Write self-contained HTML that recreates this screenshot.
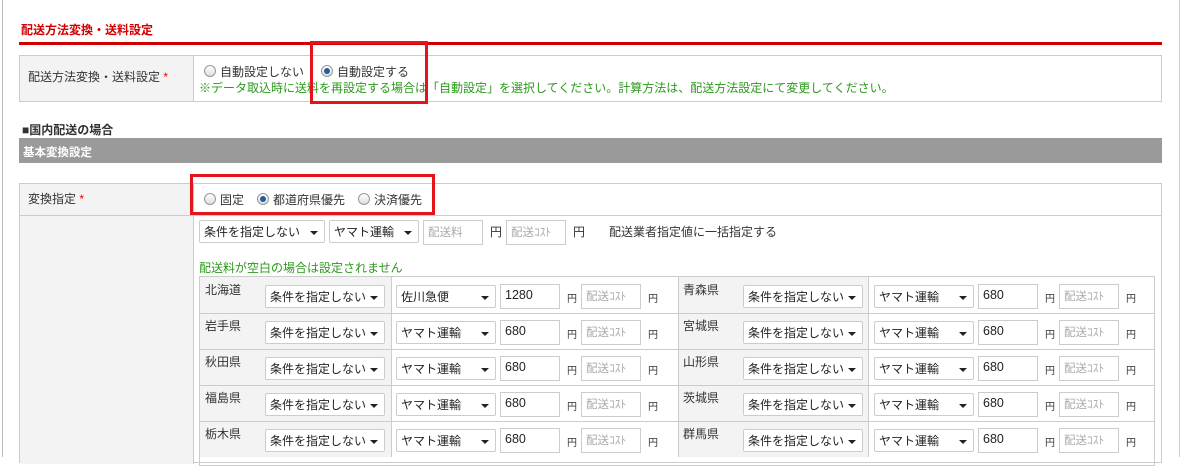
<!DOCTYPE html>
<html><head><meta charset="utf-8"><style>
*{box-sizing:border-box;margin:0;padding:0}
body{width:1183px;height:457px;overflow:hidden;background:#fff;font-family:"Liberation Sans","Noto Sans CJK JP",sans-serif;font-size:12px;color:#333;position:relative}
.a{position:absolute;white-space:nowrap}
.sel{position:absolute;height:23px;border:1px solid #ccc;border-radius:2px;background:#fff;font-size:12px;color:#222;padding:2px 4px;white-space:nowrap}
.sel:after{content:"";position:absolute;right:6px;top:10px;border-left:4px solid transparent;border-right:4px solid transparent;border-top:4px solid #222}
.inp{position:absolute;height:25px;border:1px solid #ccc;background:#fff;font-size:12.5px;padding:3px 4px;color:#222}
.ph{color:#aaa;font-size:11.5px}
.y{position:absolute;font-size:10px;color:#333}
.rad{position:absolute;width:12px;height:12px;border:1px solid #999;border-radius:50%;background:linear-gradient(#fff,#ddd)}
.rad.on:after{content:"";position:absolute;left:2px;top:2px;width:6px;height:6px;border-radius:50%;background:#1f5f9e}
.red{position:absolute;border:3px solid #e3141c}
</style></head><body>
<div class="a" style="left:2px;top:0;width:1px;height:457px;background:#bbb"></div>
<div class="a" style="left:1179px;top:0;width:1px;height:457px;background:#ccc"></div>
<div class="a" style="left:21px;top:21px;color:#d10000;font-size:12px;font-weight:bold">配送方法変換・送料設定</div>
<div class="a" style="left:19px;top:42px;width:1143px;height:3px;background:#d10000"></div>

<div class="a" style="left:19px;top:55px;width:1143px;height:47px;border:1px solid #ccc"></div>
<div class="a" style="left:20px;top:56px;width:174px;height:45px;background:#f3f3f3;border-right:1px solid #ccc"></div>
<div class="a" style="left:28px;top:68px;font-size:12px">配送方法変換・送料設定 <span style="color:#e00">*</span></div>
<div class="rad" style="left:204px;top:65px"></div>
<div class="a" style="left:220px;top:63px;font-size:12px">自動設定しない</div>
<div class="rad on" style="left:321px;top:65px"></div>
<div class="a" style="left:337px;top:63px;font-size:12px">自動設定する</div>
<div class="a" style="left:199px;top:79px;color:#2a9a1a;font-size:12px">※データ取込時に送料を再設定する場合は「自動設定」を選択してください。計算方法は、配送方法設定にて変更してください。</div>
<div class="red" style="left:310px;top:41px;width:118px;height:63px"></div>

<div class="a" style="left:22px;top:121px;font-weight:bold;font-size:12px">■国内配送の場合</div>
<div class="a" style="left:19px;top:138px;width:1143px;height:25px;background:#9a9a9a;color:#fff;font-weight:bold;padding:6px 4px;font-size:11.5px">基本変換設定</div>

<div class="a" style="left:19px;top:183px;width:1143px;height:280px;border:1px solid #ccc"></div>
<div class="a" style="left:20px;top:184px;width:174px;height:280px;background:#f3f3f3;border-right:1px solid #ccc"></div>
<div class="a" style="left:20px;top:215px;width:1141px;height:1px;background:#ccc"></div>
<div class="a" style="left:28px;top:190px;font-size:12px">変換指定 <span style="color:#e00">*</span></div>
<div class="rad" style="left:204px;top:193px"></div>
<div class="a" style="left:220px;top:191px;font-size:12px">固定</div>
<div class="rad on" style="left:257px;top:193px"></div>
<div class="a" style="left:273px;top:191px;font-size:12px">都道府県優先</div>
<div class="rad" style="left:358px;top:193px"></div>
<div class="a" style="left:374px;top:191px;font-size:12px">決済優先</div>
<div class="red" style="left:190px;top:174px;width:245px;height:41px"></div>

<div class="sel" style="left:199px;top:220px;width:126px">条件を指定しない</div>
<div class="sel" style="left:329px;top:220px;width:90px">ヤマト運輸</div>
<div class="inp ph" style="left:423px;top:220px;width:60px;height:25px">配送料</div>
<div class="a" style="left:490px;top:223px;font-size:12px">円</div>
<div class="inp ph" style="left:506px;top:220px;width:60px;height:25px">配送ｺｽﾄ</div>
<div class="a" style="left:573px;top:223px;font-size:12px">円</div>
<div class="a" style="left:609px;top:223px;font-size:12px">配送業者指定値に一括指定する</div>
<div class="a" style="left:199px;top:259px;color:#2a9a1a;font-size:12px">配送料が空白の場合は設定されません</div>

<div class="a" style="left:199px;top:276px;width:956px;height:190px;border:1px solid #ccc"></div>
<div id="rows"></div>
<script>
var L=[["北海道","佐川急便","1280"],["岩手県","ヤマト運輸","680"],["秋田県","ヤマト運輸","680"],["福島県","ヤマト運輸","680"],["栃木県","ヤマト運輸","680"]];
var R=["青森県","宮城県","山形県","茨城県","群馬県"];
var h="";
for(var i=0;i<5;i++){var t=277+i*36;
h+='<div class="a" style="left:200px;top:'+t+'px;width:192px;height:36px;background:#f3f3f3;border-right:1px solid #ccc"></div>';
h+='<div class="a" style="left:678px;top:'+t+'px;width:191px;height:36px;background:#f3f3f3;border-left:1px solid #ccc;border-right:1px solid #ccc"></div>';
if(i>0)h+='<div class="a" style="left:200px;top:'+t+'px;width:954px;height:1px;background:#ccc"></div>';
h+='<div class="a" style="left:205px;top:'+(t+4)+'px;font-size:12px">'+L[i][0]+'</div>';
h+='<div class="sel" style="left:265px;top:'+(t+8)+'px;width:120px">条件を指定しない</div>';
h+='<div class="sel" style="left:396px;top:'+(t+8)+'px;width:100px">'+L[i][1]+'</div>';
h+='<div class="inp" style="left:500px;top:'+(t+7)+'px;width:60px">'+L[i][2]+'</div>';
h+='<div class="y" style="left:567px;top:'+(t+13)+'px">円</div>';
h+='<div class="inp ph" style="left:581px;top:'+(t+7)+'px;width:60px">配送ｺｽﾄ</div>';
h+='<div class="y" style="left:648px;top:'+(t+13)+'px">円</div>';
h+='<div class="a" style="left:683px;top:'+(t+4)+'px;font-size:12px">'+R[i]+'</div>';
h+='<div class="sel" style="left:743px;top:'+(t+8)+'px;width:120px">条件を指定しない</div>';
h+='<div class="sel" style="left:874px;top:'+(t+8)+'px;width:100px">ヤマト運輸</div>';
h+='<div class="inp" style="left:978px;top:'+(t+7)+'px;width:60px">680</div>';
h+='<div class="y" style="left:1045px;top:'+(t+13)+'px">円</div>';
h+='<div class="inp ph" style="left:1059px;top:'+(t+7)+'px;width:60px">配送ｺｽﾄ</div>';
h+='<div class="y" style="left:1126px;top:'+(t+13)+'px">円</div>';}
document.getElementById("rows").innerHTML=h;
</script>
</body></html>
